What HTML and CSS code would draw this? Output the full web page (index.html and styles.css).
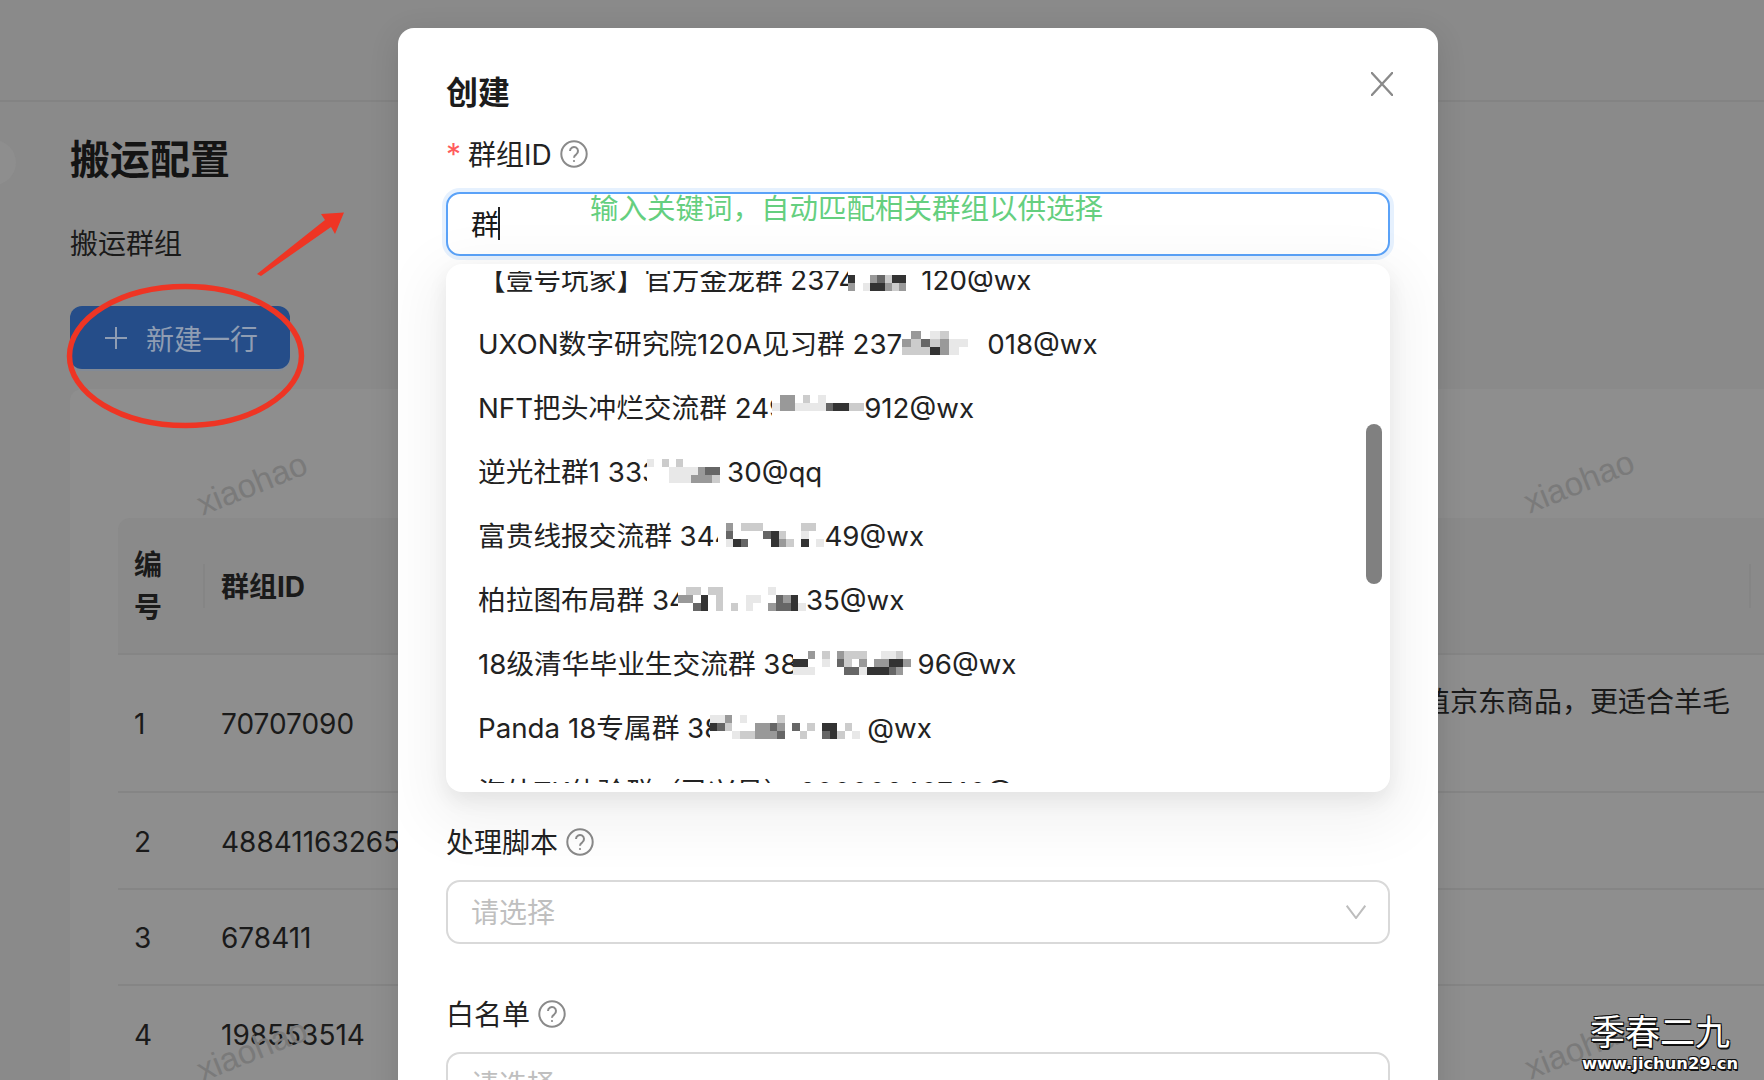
FILE: index.html
```html
<!DOCTYPE html>
<html lang="zh-CN">
<head>
<meta charset="utf-8">
<title>搬运配置</title>
<link rel="stylesheet" href="styles.css">
</head>
<body>
<div class="page">
  <section class="side side-left">
    <div class="topbar"></div>
    <div class="main">
      <h1 class="page-title">搬运配置</h1>
      <div class="section-label">搬运群组</div>
      <button class="add-btn"><svg class="plus" viewBox="0 0 22 22"><path d="M11 0v22M0 11h22"/></svg><span>新建一行</span></button>
      <div class="card">
        <div class="thead">
          <div class="th th-no">编<br>号</div>
          <i class="sep sep-l"></i>
          <div class="th th-id">群组ID</div>
        </div>
        <div class="row row-a"><div class="no">1</div><div class="gid">70707090</div></div>
        <div class="row row-b"><div class="no">2</div><div class="gid">48841163265</div></div>
        <div class="row row-c"><div class="no">3</div><div class="gid">678411</div></div>
        <div class="row row-d"><div class="no">4</div><div class="gid">198553514</div></div>
      </div>
    </div>
  </section>

  <section class="side side-right">
    <div class="topbar"></div>
    <div class="card-r">
      <div class="thead-r"><i class="sep sep-r"></i></div>
      <div class="row-r row-a note"><span>值京东商品，更适合羊毛</span></div>
      <div class="row-r row-b"></div>
      <div class="row-r row-c"></div>
    </div>
  </section>

  <div class="collapse"></div>
  <span class="wm wm1">xiaohao</span>
  <span class="wm wm2">xiaohao</span>
  <span class="wm wm3">xiaohao</span>
  <span class="wm wm4">xiaohao</span>

  <svg class="marks" viewBox="0 0 398 440">
    <ellipse cx="185.500" cy="356" rx="116" ry="69.500" fill="none" stroke="#ee3524" stroke-width="5.500"/>
    <path d="M257 274L325 220L321 214L344 212.500L335 234L331 227L261 276Z" fill="#ee3524"/>
  </svg>

  <div class="brand">
    <div class="brand-cn">季春二九</div>
    <div class="brand-url">www.jichun29.cn</div>
  </div>

  <div class="modal">
    <svg class="close" viewBox="0 0 22 24"><path d="M0 0L22 24M22 0L0 24"/></svg>
    <h2 class="modal-title">创建</h2>

    <div class="label"><span class="req">*</span><span class="lt">群组ID</span><svg class="help" viewBox="0 0 28 28"><circle cx="14" cy="14" r="12.700"/><path d="M10 11a4 4 0 1 1 6.300 3.300c-1.500 1-2.300 1.700-2.300 3.500"/><circle class="dot" cx="14" cy="21" r="1.100"/></svg></div>
    <div class="input input-focus"><span>群</span><i class="caret"></i></div>

    <div class="label label-gap"><span class="lt">处理脚本</span><svg class="help" viewBox="0 0 28 28"><circle cx="14" cy="14" r="12.700"/><path d="M10 11a4 4 0 1 1 6.300 3.300c-1.500 1-2.300 1.700-2.300 3.500"/><circle class="dot" cx="14" cy="21" r="1.100"/></svg></div>
    <div class="input select"><span class="ph">请选择</span><svg class="chev" viewBox="0 0 20 14"><path d="M.7 .7L10 13L19.300 .7"/></svg></div>

    <div class="label label-gap2"><span class="lt">白名单</span><svg class="help" viewBox="0 0 28 28"><circle cx="14" cy="14" r="12.700"/><path d="M10 11a4 4 0 1 1 6.300 3.300c-1.500 1-2.300 1.700-2.300 3.500"/><circle class="dot" cx="14" cy="21" r="1.100"/></svg></div>
    <div class="input select"><span class="ph">请选择</span></div>

    <div class="hint">输入关键词，自动匹配相关群组以供选择</div>

    <div class="dropdown">
      <div class="viewport">
        <ul class="list">
          <li>【壹号坑家】官方金龙群 2374<svg class="mos m1" viewBox="0 0 10 3" preserveAspectRatio="none"><path class="k1" d="M0 1.500h1M6 1.500h2M3 2.500h2"/><path class="k2" d="M4 1.500h1"/><path class="k3" d="M3 1.500h1M0 2.500h1M5 2.500h1M7 2.500h1"/><path class="k4" d="M5 1.500h1M6 2.500h1"/><path class="k5" d="M2 2.500h1"/></svg>120@wx</li>
          <li>UXON数字研究院120A见习群 237<svg class="mos m2" viewBox="0 0 9 3" preserveAspectRatio="none"><path class="k1" d="M3 2.500h1"/><path class="k2" d="M2 1.500h1"/><path class="k3" d="M0 1.500h1M4 1.500h1M4 2.500h1M1 .5h1"/><path class="k4" d="M1 1.500h1M3 1.500h1M0 2.500h2M2 2.500h1M4 .5h1"/><path class="k5" d="M5 1.500h2M5 2.500h1M3 .5h1"/></svg>018@wx</li>
          <li>NFT把头冲烂交流群 249<svg class="mos m3" viewBox="0 0 12 3" preserveAspectRatio="none"><path class="k1" d="M8 1.500h2"/><path class="k2" d="M7 1.500h1"/><path class="k3" d="M1 .5h2M1 1.500h2"/><path class="k4" d="M10 1.500h2M4 .5h1"/><path class="k5" d="M0 1.500h1M3 1.500h4M6 .5h1"/></svg>912@wx</li>
          <li>逆光社群1 333<svg class="mos m4" viewBox="0 0 11 3" preserveAspectRatio="none"><path class="k2" d="M8 1.500h2"/><path class="k3" d="M7 1.500h1M6 2.500h3"/><path class="k4" d="M2 .5h1M4 .5h1M9 2.500h1"/><path class="k5" d="M0 .5h1M3 1.500h4M3 2.500h3"/></svg>30@qq</li>
          <li>富贵线报交流群 344<svg class="mos m5" viewBox="0 0 14 3" preserveAspectRatio="none"><path class="k1" d="M7 1.500h1M2 2.500h1M7 2.500h1M11 2.500h1"/><path class="k2" d="M1 1.500h1M3 2.500h1M6 1.500h1"/><path class="k3" d="M1 .5h1M8 2.500h1"/><path class="k4" d="M3 .5h3M11 .5h2M8 1.500h1M9 2.500h1"/><path class="k5" d="M1 2.500h1M11 1.500h1M13 2.500h1"/></svg>49@wx</li>
          <li>柏拉图布局群 34<svg class="mos m6" viewBox="0 0 17 3" preserveAspectRatio="none"><path class="k1" d="M3 2.500h1M3 1.500h1M15 1.500h1M15 2.500h1"/><path class="k2" d="M2 2.500h1M13 1.500h1M13 2.500h2"/><path class="k3" d="M0 1.500h2M14 1.500h1M12 2.500h1"/><path class="k4" d="M1 .5h2M4 .5h2M5 1.500h1M5 2.500h1M7 2.500h1"/><path class="k5" d="M9 1.500h2M12 .5h1M9 2.500h1M16 2.500h1"/></svg>35@wx</li>
          <li>18级清华毕业生交流群 38<svg class="mos m7" viewBox="0 0 17 3" preserveAspectRatio="none"><path class="k1" d="M0 1.500h2M13 1.500h2M10 2.500h3"/><path class="k2" d="M6 1.500h1M7 2.500h2M13 2.500h1"/><path class="k3" d="M2 .5h1M6 .5h1M9 1.500h1M11 1.500h2M15 1.500h1M14 2.500h1"/><path class="k4" d="M4 .5h1M7 .5h3M7 1.500h1M14 .5h1"/><path class="k5" d="M0 2.500h3M4 1.500h1M12 .5h2M9 2.500h1"/></svg>96@wx</li>
          <li>Panda 18专属群 38<svg class="mos m8" viewBox="0 0 21 3" preserveAspectRatio="none"><path class="k1" d="M0 1.500h1M15 1.500h2M16 2.500h1"/><path class="k2" d="M1 1.500h1M8 1.500h1M11 1.500h1M9 2.500h1M15 2.500h1"/><path class="k3" d="M2 .5h1M6 1.500h2M9 1.500h1M6 2.500h3"/><path class="k4" d="M2 1.500h1M4 2.500h2M9 .5h1M13 1.500h1M12 2.500h1M17 2.500h1M18 1.500h1"/><path class="k5" d="M0 .5h2M4 .5h1M3 2.500h1M19 2.500h1"/></svg>@wx</li>
          <li>海外TK体验群（已兴号） 20000240740@</li>
        </ul>
      </div>
      <div class="thumb"></div>
    </div>
  </div>
</div>
</body>
</html>
```

FILE: styles.css
```css
* { box-sizing: border-box; }
html, body { margin: 0; padding: 0; }
body {
  font-family: Inter, "Noto Sans CJK SC", sans-serif;
  color: #1a1a1a;
  background: #8a8a8a;
}
.page {
  position: relative;
  display: flex;
  justify-content: space-between;
  width: 1764px;
  height: 1080px;
  overflow: hidden;
  background: #8a8a8a;
}

/* dimmed page behind the modal */
.side { height: 1080px; overflow: hidden; }
.side-left { width: 398px; }
.side-right { width: 326px; }
.topbar { height: 102px; border-bottom: 2px solid #838383; }
.main { padding-left: 70px; }
.page-title {
  margin: 33px 0 0;
  font-size: 40px;
  line-height: 50px;
  font-weight: 700;
  color: #141414;
}
.section-label {
  margin-top: 41px;
  font-size: 28px;
  line-height: 36px;
}
.add-btn {
  display: flex;
  align-items: center;
  gap: 19px;
  width: 220px;
  height: 63px;
  margin-top: 44px;
  padding: 0 0 0 35px;
  border: 0;
  border-radius: 12px;
  background: #254d89;
  color: #8f9db3;
  font: inherit;
  font-size: 28px;
  box-shadow: 0 2px 0 #828a96;
}
.plus { width: 22px; height: 22px; flex: none; }
.plus path { fill: none; stroke: #8f9db3; stroke-width: 2; }
.card {
  width: 400px;
  height: 720px;
  margin-top: 20px;
  padding: 129px 0 0 48px;
  background: #8e8e8e;
  border-radius: 12px 0 0 0;
}
.thead {
  position: relative;
  display: flex;
  align-items: center;
  height: 137px;
  padding-top: 3px;
  background: #8a8a8a;
  border-bottom: 2px solid #858585;
  border-radius: 12px 0 0 0;
  font-weight: 700;
  font-size: 28px;
  line-height: 43px;
}
.th-no { width: 85px; padding-left: 16px; }
.th-id { padding-left: 18px; }
.sep {
  position: absolute;
  top: 46px;
  width: 2px;
  height: 44px;
  background: #858585;
}
.sep-l { left: 85px; }
.sep-r { left: 311px; }
.row {
  display: flex;
  align-items: center;
  padding-top: 2px;
  font-size: 28px;
  border-bottom: 2px solid #858585;
  white-space: nowrap;
}
.row-a { height: 138px; }
.row-b { height: 97px; }
.row-c { height: 96px; }
.row-d { height: 96px; border-bottom: 0; }
.no { width: 85px; padding-left: 16px; flex: none; }
.gid { padding-left: 18px; }

.card-r { margin-top: 287px; padding-top: 129px; background: #8e8e8e; height: 700px; }
.thead-r {
  position: relative;
  height: 137px;
  background: #8a8a8a;
  border-bottom: 2px solid #858585;
}
.row-r { border-bottom: 2px solid #858585; }
.note {
  display: flex;
  justify-content: flex-end;
  padding: 27px 34px 0 0;
  font-size: 28px;
  line-height: 40px;
  white-space: nowrap;
}
.note span { flex: none; }

.collapse {
  position: absolute;
  left: -29px;
  top: 140px;
  width: 45px;
  height: 45px;
  border-radius: 50%;
  background: #8e8e8e;
}
.wm {
  position: absolute;
  font-family: "Liberation Sans", Arial, sans-serif;
  font-size: 33px;
  line-height: 36px;
  color: #7a7a7a;
  transform: translate(-50%, -50%) rotate(-22deg);
}
.wm1 { left: 252px; top: 484px; }
.wm2 { left: 1579px; top: 482px; }
.wm3 { left: 252px; top: 1050px; }
.wm4 { left: 1580px; top: 1048px; }

.marks {
  position: absolute;
  left: 0;
  top: 0;
  width: 398px;
  height: 440px;
}

.brand {
  position: absolute;
  left: 1570px;
  top: 1006px;
  width: 180px;
  text-align: center;
  color: #fff;
  text-shadow: -1px -1px 0 #111, 1px -1px 0 #111, -1px 1px 0 #111, 1px 1px 0 #111, 1px 2px 0 #111;
}
.brand-cn { font-size: 35px; line-height: 48px; font-family: "Noto Sans CJK SC", sans-serif; }
.brand-url { font-family: "DejaVu Sans", sans-serif; font-weight: 700; font-size: 16.300px; line-height: 20px; white-space: nowrap; }

/* modal */
.modal {
  position: absolute;
  left: 398px;
  top: 28px;
  width: 1040px;
  height: 1100px;
  padding: 45px 48px 0;
  background: #fff;
  border-radius: 16px;
  box-shadow: 0 6px 30px rgba(0, 0, 0, .12);
}
.close {
  position: absolute;
  right: 45px;
  top: 44px;
  width: 22px;
  height: 24px;
}
.close path { fill: none; stroke: #8a8a8a; stroke-width: 2.200; }
.modal-title {
  margin: 0;
  font-size: 32px;
  line-height: 40px;
  font-weight: 700;
  color: #1c1c1c;
}
.label {
  display: flex;
  align-items: center;
  height: 36px;
  margin-top: 23px;
  font-size: 28px;
  color: #222;
}
.lt { margin-top: -2px; }
.label-gap { margin-top: 568px; }
.label-gap2 { margin-top: 52px; }
.req { width: 22px; color: #ff5c5c; font-size: 30px; line-height: 36px; }
.help { width: 28px; height: 28px; margin-left: 8px; }
.help circle, .help path { fill: none; stroke: #8a8a8a; stroke-width: 2; }
.help .dot { fill: #8a8a8a; stroke: none; }
.input {
  display: flex;
  align-items: center;
  height: 64px;
  margin-top: 20px;
  padding: 0 23px 2px;
  border: 2px solid #d9d9d9;
  border-radius: 14px;
  font-size: 28px;
  background: #fff;
}
.input-focus {
  border-color: #5aa2f8;
  box-shadow: 0 0 0 4px #e6f1fe;
}
.caret { width: 2px; height: 33px; margin-left: -1px; background: #222; }
.select { justify-content: space-between; }
.ph { color: #bfbfbf; }
.chev { width: 20px; height: 14px; margin: 2px -1px 0 0; }
.chev path { fill: none; stroke: #bdbdbd; stroke-width: 2; }
.hint {
  position: absolute;
  left: 192px;
  top: 161px;
  font-size: 28.500px;
  line-height: 40px;
  color: #65cf7f;
  white-space: nowrap;
}
.dropdown {
  position: absolute;
  left: 48px;
  top: 236px;
  width: 944px;
  height: 528px;
  padding: 7px 0 9px;
  background: #fff;
  border-radius: 16px;
  box-shadow: 0 18px 56px 18px rgba(0, 0, 0, .05), 0 8px 20px rgba(0, 0, 0, .07);
}
.viewport { height: 512px; overflow: hidden; }
.list { margin: -23px 0 0; padding: 0; list-style: none; }
.list li {
  height: 64px;
  padding-left: 32px;
  font-size: 27.700px;
  line-height: 64px;
  color: #222;
  white-space: nowrap;
}
.thumb {
  position: absolute;
  right: 8px;
  top: 160px;
  width: 16px;
  height: 160px;
  border-radius: 8px;
  background: #808080;
}
.mos {
  display: inline-block;
  height: 24px;
  vertical-align: -1px;
  background: #fff;
  shape-rendering: crispEdges;
}
.mos path { fill: none; stroke-width: 1; }
.mos .k1 { stroke: #333; }
.mos .k2 { stroke: #666; }
.mos .k3 { stroke: #999; }
.mos .k4 { stroke: #ccc; }
.mos .k5 { stroke: #e8e8e8; }
.m1 { width: 73px; margin-left: -8px; }
.m2 { width: 85px; margin-left: 0; }
.m3 { width: 92px; margin-left: -14px; }
.m4 { width: 80px; margin-left: -12px; }
.m5 { width: 106px; margin-left: -14px; }
.m6 { width: 128px; margin-left: -9px; }
.m7 { width: 125px; margin-left: -5px; }
.m8 { width: 157px; margin-left: -11px; }
```
